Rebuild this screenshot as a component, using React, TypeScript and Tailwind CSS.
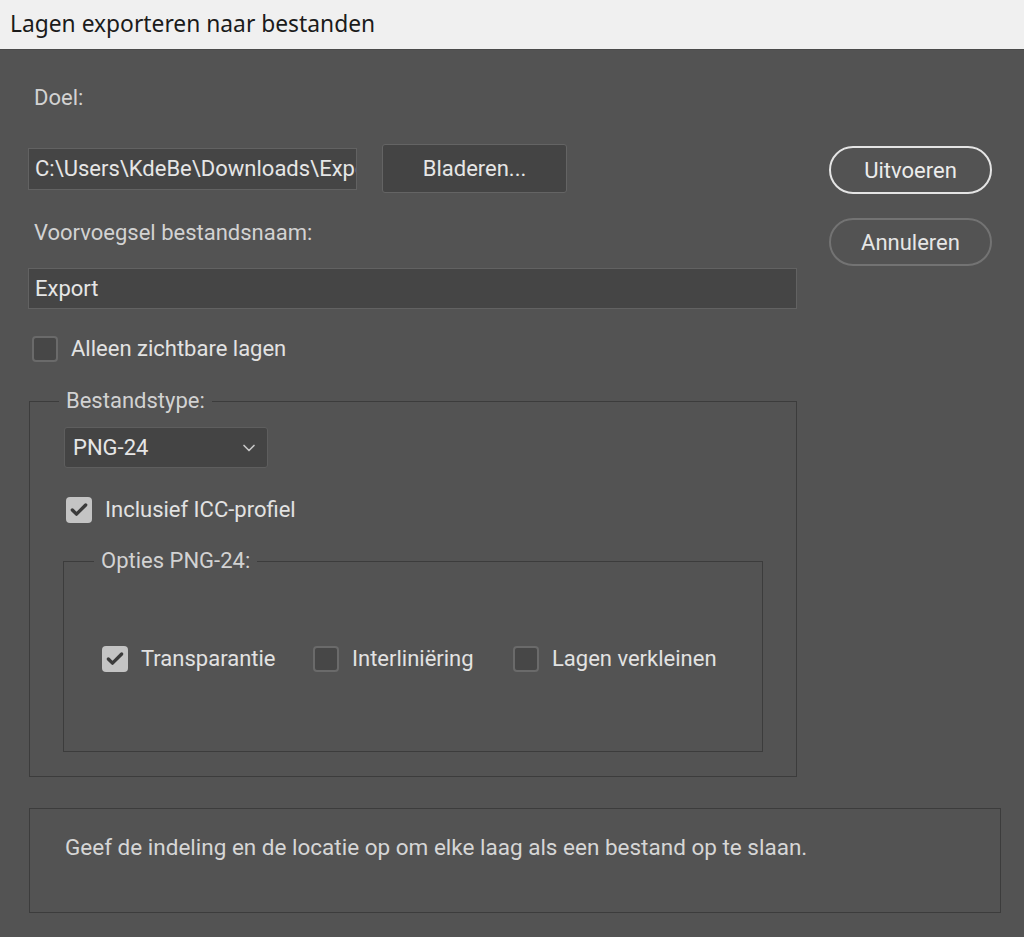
import { Check, ChevronDown } from 'lucide-react'

const font = { fontFamily: 'Roboto, "Noto Sans", sans-serif' }

function Box({ checked }: { checked?: boolean }) {
  return checked ? (
    <span className="flex h-[26px] w-[26px] shrink-0 items-center justify-center rounded-[4px] bg-[#c4c4c4]">
      <Check className="h-[20px] w-[20px] text-[#3b3b3b]" strokeWidth={4} />
    </span>
  ) : (
    <span className="h-[26px] w-[26px] shrink-0 rounded-[4px] border-2 border-[#6a6a6a] bg-[#474747]" />
  )
}

function CheckRow({ label, checked }: { label: string; checked?: boolean }) {
  return (
    <label className="flex items-center gap-[13px]">
      <Box checked={checked} />
      <span className="text-[22px] leading-[27px] text-[#e2e2e2]">{label}</span>
    </label>
  )
}

export default function App() {
  return (
    <div className="flex h-[937px] w-[1024px] flex-col overflow-hidden bg-[#535353]" style={font}>
      <div
        className="flex h-[50px] shrink-0 items-center border-b border-[#4a4a4a] bg-[#f0f0f0] pl-[10px] text-[22.8px] text-[#1b1b1b]"
        style={{ fontFamily: '"Noto Sans", "Open Sans", sans-serif' }}
      >
        Lagen exporteren naar bestanden
      </div>

      <div className="flex pl-[28px]">
        <div className="flex w-[769px] flex-col">
          <div className="mt-[36px] pl-[6px] text-[22px] leading-[24px] text-[#d2d2d2]">Doel:</div>

          <div className="mt-[34px] flex items-center gap-[25px]">
            {/* path is cut off at the field edge, as in the dialog */}
            <div className="flex h-[42px] w-[329px] items-center overflow-hidden whitespace-nowrap border border-[#626262] bg-[#454545] pl-[6px] text-[22px] text-[#e6e6e6]">
              C:\Users\KdeBe\Downloads\Export
            </div>
            <button className="h-[49px] w-[185px] rounded-[3px] border border-[#646464] bg-[#444444] text-[22px] text-[#e6e6e6]">
              Bladeren...
            </button>
          </div>

          <div className="mt-[28px] pl-[6px] text-[22px] leading-[24px] text-[#d2d2d2]">Voorvoegsel bestandsnaam:</div>

          <div className="mt-[23px] flex h-[41px] w-[769px] items-center border border-[#626262] bg-[#454545] pl-[6px] text-[22px] text-[#e6e6e6]">
            Export
          </div>

          <div className="mt-[26px] pl-[4px]">
            <CheckRow label="Alleen zichtbare lagen" />
          </div>

          <fieldset className="ml-[1px] mt-[27px] border border-[#3c3c3c] pb-[24px]">
            <legend className="ml-[29px] px-[7px] text-[22px] leading-[24px] text-[#d2d2d2]">Bestandstype:</legend>

            <div className="ml-[34px] mt-[14px] flex h-[41px] w-[204px] items-center justify-between rounded-[3px] border border-[#5e5e5e] bg-[#444444] pl-[8px] pr-[8px] text-[22px] text-[#e6e6e6]">
              PNG-24
              <ChevronDown className="h-[20px] w-[20px] text-[#c8c8c8]" strokeWidth={2} />
            </div>

            <div className="ml-[36px] mt-[28px]">
              <CheckRow label="Inclusief ICC-profiel" checked />
            </div>

            <fieldset className="ml-[33px] mt-[26px] w-[700px] border border-[#3c3c3c] pb-[79px]">
              <legend className="ml-[30px] px-[7px] text-[22px] leading-[24px] text-[#d2d2d2]">Opties PNG-24:</legend>
              <div className="ml-[38px] mt-[72px] flex items-center">
                <div className="w-[211px]">
                  <CheckRow label="Transparantie" checked />
                </div>
                <div className="w-[200px]">
                  <CheckRow label="Interliniëring" />
                </div>
                <CheckRow label="Lagen verkleinen" />
              </div>
            </fieldset>
          </fieldset>

          <div className="ml-[1px] mt-[31px] h-[105px] w-[972px] border border-[#3c3c3c] pl-[35px] pt-[26px] text-[22.5px] leading-[24px] text-[#d6d6d6]">
            Geef de indeling en de locatie op om elke laag als een bestand op te slaan.
          </div>
        </div>

        <div className="ml-[32px] flex w-[163px] flex-col gap-[24px] pt-[96px]">
          <button className="h-[48px] rounded-full border-2 border-[#e4e4e4] text-[22px] text-[#ececec]">Uitvoeren</button>
          <button className="h-[48px] rounded-full border-2 border-[#737373] text-[22px] text-[#e6e6e6]">Annuleren</button>
        </div>
      </div>
    </div>
  )
}
